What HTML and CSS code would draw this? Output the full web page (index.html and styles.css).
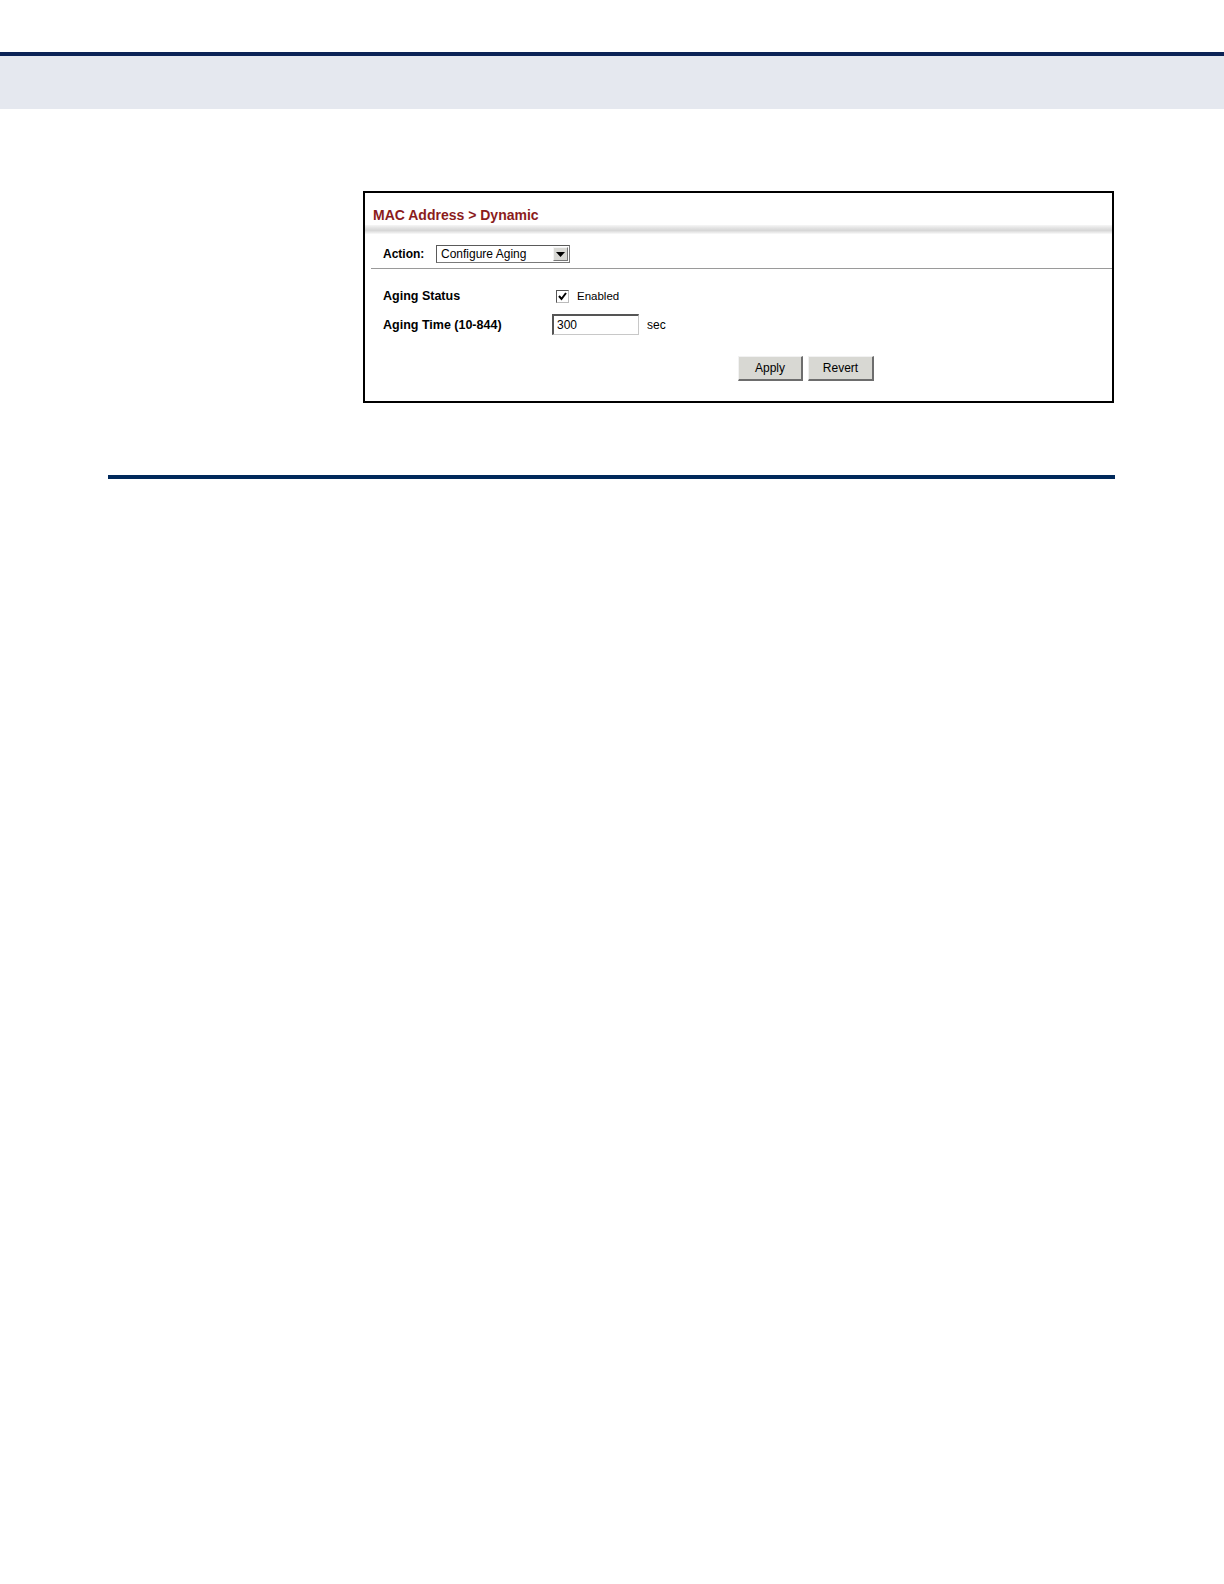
FILE: index.html
```html
<!DOCTYPE html>
<html>
<head>
<meta charset="utf-8">
<title>MAC Address &gt; Dynamic</title>
<link rel="stylesheet" href="styles.css">
</head>
<body>
<div class="top-rule"></div>
<div class="top-band"></div>

<div class="panel">
  <div class="panel-title">MAC Address &gt; Dynamic</div>
  <div class="panel-shade"></div>
  <div class="action-row">
    <span class="label">Action:</span>
    <div class="select">
      <span class="select-text">Configure Aging</span>
      <span class="select-btn">
        <svg width="9" height="5" viewBox="0 0 9 5"><polygon points="0,0 9,0 4.5,5" fill="#000"/></svg>
      </span>
    </div>
  </div>
  <div class="separator"></div>
  <div class="form">
    <div class="form-row row-status">
      <span class="label form-label">Aging Status</span>
      <span class="checkbox">
        <svg width="11" height="11" viewBox="0 0 11 11"><polyline points="2,5 4.5,8 9,2" fill="none" stroke="#000" stroke-width="2"/></svg>
      </span>
      <span class="value-text small">Enabled</span>
    </div>
    <div class="form-row row-time">
      <span class="label form-label">Aging Time (10-844)</span>
      <span class="input">300</span>
      <span class="value-text">sec</span>
    </div>
  </div>
  <div class="buttons">
    <span class="button btn-apply">Apply</span>
    <span class="button btn-revert">Revert</span>
  </div>
</div>

<div class="bottom-rule"></div>
</body>
</html>
```

FILE: styles.css
```css
html, body {
  margin: 0;
  padding: 0;
  background: #ffffff;
}
body {
  font-family: "Liberation Sans", Arial, sans-serif;
  color: #000;
}
.top-rule {
  margin-top: 52px;
  height: 4px;
  background: #0c2356;
}
.top-band {
  height: 53px;
  background: #e5e8ef;
}
.panel {
  margin-top: 82px;
  margin-left: 363px;
  width: 747px;
  border: 2px solid #000;
  background: #fff;
}
.panel-title {
  height: 18px;
  padding-top: 14px;
  padding-left: 8px;
  font-size: 14px;
  line-height: 17px;
  font-weight: bold;
  color: #8b1c1c;
}
.panel-shade {
  height: 9px;
  background: linear-gradient(to bottom, #f6f6f6 0%, #e2e2e2 35%, #d6d6d6 60%, #ececec 85%, #fafafa 100%);
}
.action-row {
  display: flex;
  align-items: center;
  padding-top: 11px;
  padding-bottom: 5px;
  padding-left: 18px;
  height: 18px;
}
.label {
  font-size: 12.5px;
  font-weight: bold;
  line-height: 14px;
}
.action-row .label {
  font-size: 12px;
  width: 53px;
}
.select {
  display: flex;
  align-items: center;
  justify-content: space-between;
  width: 132px;
  height: 16px;
  border: 1px solid #7a7a7a;
  border-top-color: #5a5a5a;
  border-left-color: #5a5a5a;
  background: #fff;
}
.select-text {
  font-size: 12px;
  line-height: 14px;
  padding-left: 4px;
  color: #000;
}
.select-btn {
  display: flex;
  align-items: center;
  justify-content: center;
  box-sizing: border-box;
  width: 15px;
  height: 14px;
  margin-right: 1px;
  background: #d8d8d4;
  border-top: 1px solid #f4f4f4;
  border-left: 1px solid #f4f4f4;
  border-right: 1px solid #777;
  border-bottom: 1px solid #777;
}
.separator {
  margin-left: 6px;
  height: 1px;
  background: #9a9a9a;
}
.form {
  padding-top: 17px;
  padding-left: 18px;
  display: flex;
  flex-direction: column;
  gap: 8px;
}
.form-row {
  display: flex;
  align-items: center;
}
.row-status {
  height: 20px;
}
.row-time {
  height: 21px;
}
.form-label {
  width: 169px;
  flex: none;
}
.checkbox {
  display: flex;
  align-items: center;
  justify-content: center;
  box-sizing: border-box;
  width: 13px;
  height: 13px;
  margin-left: 4px;
  margin-right: 8px;
  border: 1px solid #555;
  border-right-color: #bbb;
  border-bottom-color: #bbb;
  background: #fff;
}
.value-text {
  font-size: 12px;
  line-height: 14px;
}
.value-text.small {
  font-size: 11.5px;
}
.input {
  box-sizing: border-box;
  width: 87px;
  height: 21px;
  margin-right: 8px;
  padding-left: 3px;
  font-size: 12px;
  line-height: 19px;
  border: 2px solid #555;
  border-right: 1px solid #c8c8c8;
  border-bottom: 1px solid #c8c8c8;
  background: #fff;
}
.buttons {
  display: flex;
  gap: 5px;
  margin-top: 21px;
  margin-left: 373px;
  padding-bottom: 20px;
}
.button {
  box-sizing: border-box;
  display: flex;
  align-items: center;
  justify-content: center;
  height: 25px;
  font-size: 12px;
  line-height: 14px;
  color: #000;
  background: #d8d8d3;
  border-top: 1px solid #f2f2f2;
  border-left: 1px solid #f2f2f2;
  border-right: 2px solid #6d6d6d;
  border-bottom: 2px solid #6d6d6d;
}
.btn-apply {
  width: 65px;
}
.btn-revert {
  width: 66px;
}
.bottom-rule {
  margin-top: 72px;
  margin-left: 108px;
  width: 1007px;
  height: 4px;
  background: #00295b;
}
```
